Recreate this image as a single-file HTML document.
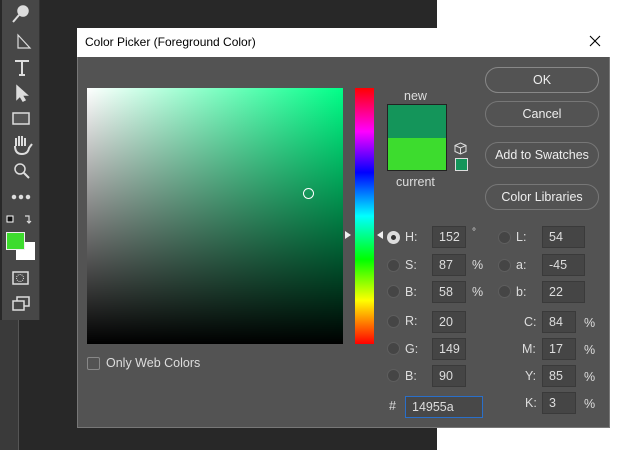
<!DOCTYPE html>
<html><head><style>
*{margin:0;padding:0;box-sizing:border-box}
body{width:634px;height:450px;overflow:hidden;background:#282828;font-family:"Liberation Sans",sans-serif;position:relative}
.a{position:absolute}
.t{color:#ddd;font-size:12px}
.btn{position:absolute;left:485px;width:114px;height:26px;border:1.5px solid #888;border-radius:13px;color:#eee;font-size:12.5px;text-align:center;line-height:24px}
.in{position:absolute;height:22px;background:#454545;border:1px solid #3a3a3a;color:#ddd;font-size:12.5px;line-height:20px;padding-left:6px}
.rad{position:absolute;width:13px;height:13px;border-radius:50%;background:#454545;border:1px solid #5e5e5e}
.lb{position:absolute;color:#ddd;font-size:12.5px}
</style></head><body>
<div class="a" style="left:437px;top:0;width:197px;height:450px;background:#fff"></div>
<div class="a" style="left:0;top:320px;width:19px;height:130px;background:#3a3a3a;border-right:1px solid #555"></div>
<div class="a" style="left:2px;top:0;width:38px;height:320px;background:#474747;border-right:1px solid #333"></div>
<svg class="a" style="left:0;top:0" width="40" height="320" fill="none" stroke="#ddd" stroke-width="1.5">
<circle cx="23" cy="11" r="5" fill="#ddd"/><path d="M19 15l-6 7" stroke-width="2"/>
<path d="M18 35 L18 48 L30 48 Z" stroke-width="1.2"/>
<path d="M15 61h14M22 61v14M19 75h6" stroke-width="2"/>
<path d="M17 86 L17 99 L20 96 L23 101 L25 100 L22 95 L27 95 Z" fill="#ddd"/>
<rect x="13" y="113" width="16" height="11" fill="#555"/>
<path d="M16 146v-8M19 146v-10M22 146v-10M25 146v-8M15 146q0 8 7 8q6 0 7-6l3-4" stroke-width="2"/>
<circle cx="20" cy="169" r="5"/><path d="M24 173l5 5" stroke-width="2"/>
<circle cx="14" cy="197" r="1.5" fill="#ddd"/><circle cx="21" cy="197" r="1.5" fill="#ddd"/><circle cx="28" cy="197" r="1.5" fill="#ddd"/>
<rect x="7" y="216" width="6" height="6" fill="#111" stroke="#fff" stroke-width="1"/>
<path d="M25 216h4v6M27 221l2 2 2-2" stroke-width="1.2"/>
<rect x="13" y="272" width="15" height="12"/>
<circle cx="20" cy="278" r="3.5" stroke-dasharray="1 1" stroke-width="1"/>
<rect x="13" y="301" width="11" height="9"/><path d="M17 301v-4h12v9h-5"/>
</svg>
<div class="a" style="left:16px;top:242px;width:19px;height:18px;background:#fff"></div>
<div class="a" style="left:6px;top:232px;width:19px;height:18px;background:#3ddc2e;border:1px solid #eee"></div>

<div class="a" style="left:77px;top:28px;width:533px;height:400px;background:#535353;border:1px solid #777"></div>
<div class="a" style="left:77px;top:28px;width:533px;height:29px;background:#fff"></div>
<div class="a" style="left:85px;top:35px;font-size:12px;color:#000">Color Picker (Foreground Color)</div>
<svg class="a" style="left:589px;top:35px" width="12" height="12" stroke="#000" stroke-width="1.1"><path d="M1 1l10 10M11 1L1 11"/></svg>

<div class="a" style="left:87px;top:88px;width:256px;height:256px;background:linear-gradient(to bottom,rgba(0,0,0,0),#000),linear-gradient(to right,#fff,#00ff88)"></div>
<div class="a" style="left:303px;top:188px;width:11px;height:11px;border-radius:50%;border:1px solid #fff"></div>
<div class="a" style="left:355px;top:88px;width:19px;height:256px;background:linear-gradient(to bottom,#f00,#f0f 17%,#00f 33%,#0ff 50%,#0f0 67%,#ff0 83%,#f00)"></div>
<div class="a" style="left:345px;top:231px;width:0;height:0;border-top:4px solid transparent;border-bottom:4px solid transparent;border-left:6px solid #eee"></div>
<div class="a" style="left:377px;top:231px;width:0;height:0;border-top:4px solid transparent;border-bottom:4px solid transparent;border-right:6px solid #eee"></div>
<div class="lb" style="left:404px;top:89px">new</div>
<div class="a" style="left:387px;top:104px;width:60px;height:67px;border:1px solid #222"><div style="height:33px;background:#14955a"></div><div style="height:32px;background:#3ddc2e"></div></div>
<div class="lb" style="left:396px;top:175px">current</div>
<svg class="a" style="left:454px;top:142px" width="13" height="13" fill="none" stroke="#ddd" stroke-width="1"><path d="M6.5 1L12 3.5V9.5L6.5 12L1 9.5V3.5Z M1 3.5L6.5 6L12 3.5M6.5 6V12"/></svg>
<div class="a" style="left:455px;top:158px;width:13px;height:13px;background:#14955a;border:1px solid #ddd"></div>

<div class="btn" style="top:67px">OK</div>
<div class="btn" style="top:101px;border-color:#777">Cancel</div>
<div class="btn" style="top:142px;border-color:#777">Add to Swatches</div>
<div class="btn" style="top:184px;border-color:#777">Color Libraries</div>

<div class="a" style="left:87px;top:357px;width:13px;height:13px;border:1px solid #888;border-radius:2px"></div>
<div class="lb" style="left:106px;top:356px">Only Web Colors</div>

<div class="rad" style="left:387px;top:231px;background:#ddd;border:0"><div style="margin:4px;width:5px;height:5px;border-radius:50%;background:#333"></div></div>
<div class="lb" style="left:405px;top:230px">H:</div><div class="in" style="left:432px;top:226px;width:34px">152</div><div class="lb" style="left:472px;top:227px;font-size:10px">°</div>
<div class="rad" style="left:387px;top:259px"></div><div class="lb" style="left:405px;top:258px">S:</div><div class="in" style="left:432px;top:254px;width:34px">87</div><div class="lb" style="left:472px;top:258px">%</div>
<div class="rad" style="left:387px;top:285px"></div><div class="lb" style="left:405px;top:285px">B:</div><div class="in" style="left:432px;top:281px;width:34px">58</div><div class="lb" style="left:472px;top:285px">%</div>
<div class="rad" style="left:387px;top:315px"></div><div class="lb" style="left:405px;top:314px">R:</div><div class="in" style="left:432px;top:311px;width:34px">20</div>
<div class="rad" style="left:387px;top:342px"></div><div class="lb" style="left:405px;top:342px">G:</div><div class="in" style="left:432px;top:338px;width:34px">149</div>
<div class="rad" style="left:387px;top:369px"></div><div class="lb" style="left:405px;top:369px">B:</div><div class="in" style="left:432px;top:365px;width:34px">90</div>
<div class="lb" style="left:389px;top:399px">#</div>
<div class="in" style="left:405px;top:396px;width:78px;border:1px solid #2a6fc9;background:#484848">14955a</div>

<div class="rad" style="left:498px;top:231px"></div><div class="lb" style="left:516px;top:230px">L:</div><div class="in" style="left:542px;top:226px;width:43px">54</div>
<div class="rad" style="left:498px;top:259px"></div><div class="lb" style="left:516px;top:258px">a:</div><div class="in" style="left:542px;top:254px;width:43px">-45</div>
<div class="rad" style="left:498px;top:285px"></div><div class="lb" style="left:516px;top:285px">b:</div><div class="in" style="left:542px;top:281px;width:43px">22</div>
<div class="lb" style="left:524px;top:315px">C:</div><div class="in" style="left:542px;top:311px;width:34px">84</div><div class="lb" style="left:584px;top:316px">%</div>
<div class="lb" style="left:522px;top:342px">M:</div><div class="in" style="left:542px;top:338px;width:34px">17</div><div class="lb" style="left:584px;top:343px">%</div>
<div class="lb" style="left:525px;top:369px">Y:</div><div class="in" style="left:542px;top:365px;width:34px">85</div><div class="lb" style="left:584px;top:370px">%</div>
<div class="lb" style="left:525px;top:396px">K:</div><div class="in" style="left:542px;top:392px;width:34px">3</div><div class="lb" style="left:584px;top:397px">%</div>
</body></html>
